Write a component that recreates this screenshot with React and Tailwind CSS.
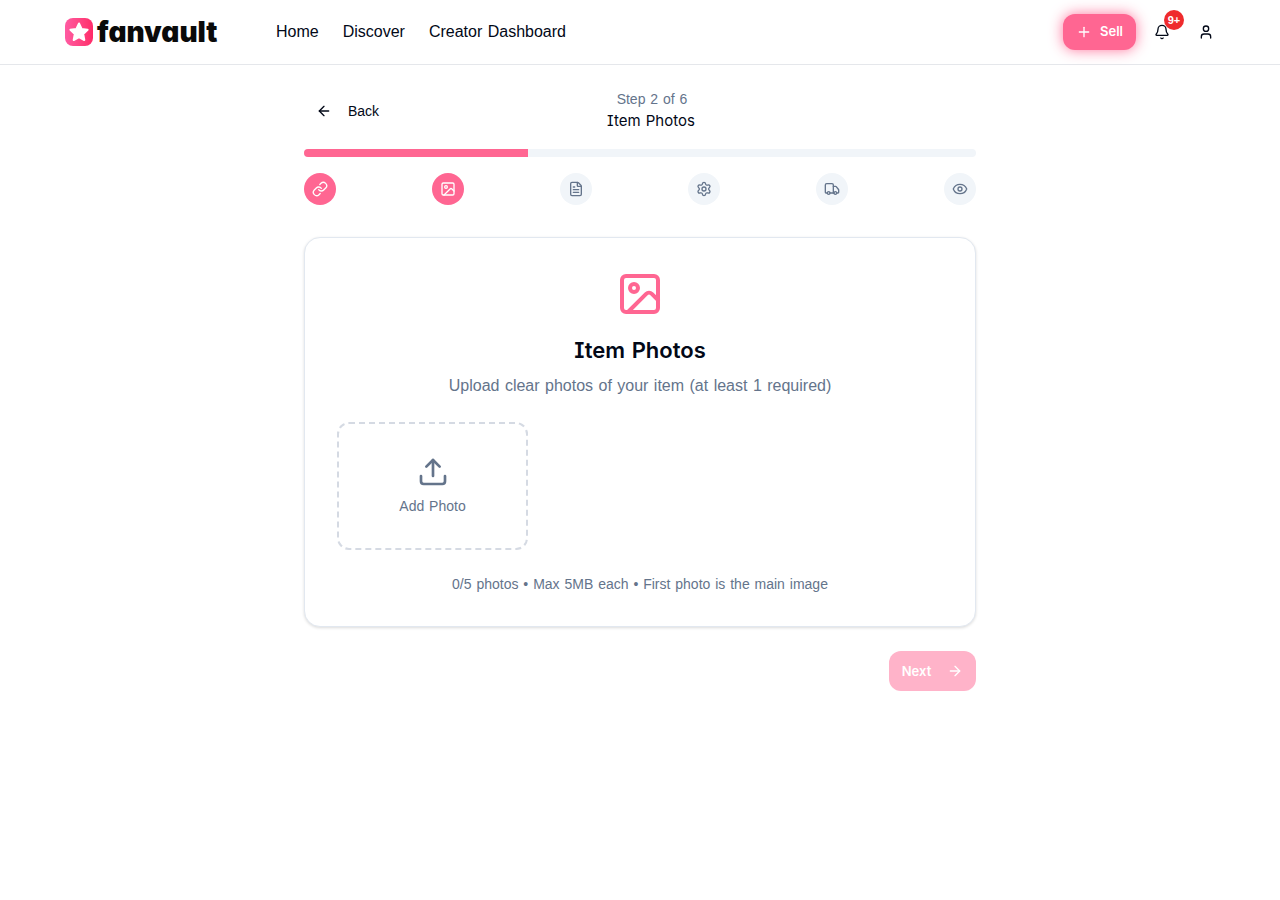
import { ArrowLeft, ArrowRight, Bell, Eye, FileText, Image, Link, Plus, Settings, Truck, Upload, User } from "lucide-react";

const steps = [
  { icon: Link, active: true },
  { icon: Image, active: true },
  { icon: FileText },
  { icon: Settings },
  { icon: Truck },
  { icon: Eye },
];

function Logo() {
  return (
    <a href="#" className="flex w-[152px] items-center gap-1">
      <span className="flex h-7 w-7 flex-none items-center justify-center rounded-lg bg-gradient-to-r from-[#ff5aa2] to-[#ff2a68]">
        <svg viewBox="0 0 24 24" className="h-6 w-6 fill-white">
          <path d="M12 3.5l2.6 5.5 6 .8-4.4 4.2 1.1 6-5.3-2.9-5.3 2.9 1.1-6-4.4-4.2 6-.8z" stroke="white" strokeWidth="2" strokeLinejoin="round" />
        </svg>
      </span>
      <span className="font-['Inter',sans-serif] text-[28px] leading-none font-black text-[#0a0a0a] [font-feature-settings:'cv11'] [word-spacing:0]">fanvault</span>
    </a>
  );
}

export default function App() {
  return (
    <div className="min-h-[900px] bg-white font-['Liberation_Sans',sans-serif] text-[#020817] [word-spacing:1px]">
      <header className="flex h-[65px] items-center border-b border-[#e5e7eb] bg-white pr-[66px] pl-[65px]">
        <Logo />
        <nav className="ml-[59px] flex items-center gap-6 text-base">
          <a href="#">Home</a>
          <a href="#">Discover</a>
          <a href="#">Creator Dashboard</a>
        </nav>
        <div className="ml-auto flex items-center">
          <button type="button" className="flex h-9 w-[73px] items-center justify-center gap-2 rounded-xl bg-[#ff6692] font-['Inter',sans-serif] text-[13px] font-semibold text-white shadow-[0_0_14px_rgba(255,102,146,0.9)]">
            <Plus className="h-4 w-4" />
            Sell
          </button>
          <button type="button" className="relative ml-[18px] flex h-4 w-4 items-center justify-center">
            <Bell className="h-4 w-4" />
            <span className="absolute -top-[14px] left-[10px] flex h-5 w-5 items-center justify-center rounded-full bg-[#ef2b2d] text-[11px] font-bold text-white">9+</span>
          </button>
          <button type="button" className="ml-7 flex h-4 w-4 items-center justify-center">
            <User className="h-4 w-4" />
          </button>
        </div>
      </header>

      <main className="mx-auto w-[672px] pt-6">
        <div className="relative flex h-11 items-center">
          <button type="button" className="flex items-center gap-4 px-3 text-sm">
            <ArrowLeft className="h-4 w-4" />
            Back
          </button>
          <div className="absolute top-0 left-[303px] w-[88px] text-center text-nowrap">
            <p className="pl-[2px] text-sm leading-5 text-[#64748b]">Step 2 of 6</p>
            <p className="font-['Inter',sans-serif] text-[15px] leading-6 [font-feature-settings:'ss02']">Item Photos</p>
          </div>
        </div>

        <div className="mt-4 h-2 overflow-hidden rounded-full bg-[#f1f5f9]">
          <div className="h-full w-1/3 bg-[#ff6692]" />
        </div>

        <div className="mt-4 flex justify-between">
          {steps.map(({ icon: Icon, active }, i) => (
            <div key={i} className={active ? "flex h-8 w-8 items-center justify-center rounded-full bg-[#ff6692] text-white" : "flex h-8 w-8 items-center justify-center rounded-full bg-[#f1f5f9] text-[#64748b]"}>
              <Icon className="h-4 w-4" />
            </div>
          ))}
        </div>

        <section className="mt-8 rounded-2xl border border-[#e2e8f0] bg-white p-8 shadow-[0_1px_3px_rgba(0,0,0,0.14)]">
          <div className="flex flex-col items-center text-center">
            <Image className="h-12 w-12 text-[#ff6692]" />
            <h2 className="mt-4 font-['Inter',sans-serif] text-[22px] leading-8 font-semibold [font-feature-settings:'ss02']">Item Photos</h2>
            <p className="mt-2 text-base leading-6 text-[#64748b]">Upload clear photos of your item (at least 1 required)</p>
          </div>
          <div className="mt-6 flex h-32 w-[191px] flex-col items-center justify-center rounded-xl border-2 border-dashed border-[#d5dae3] text-[#64748b]">
            <Upload className="h-8 w-8" />
            <span className="mt-2 text-sm">Add Photo</span>
          </div>
          <p className="mt-6 text-center text-sm text-[#64748b]">0/5 photos • Max 5MB each • First photo is the main image</p>
        </section>

        <div className="mt-6 flex justify-end">
          <button type="button" className="flex h-10 w-[87px] items-center justify-center gap-4 rounded-xl bg-[#ffb3c9] font-['Inter',sans-serif] text-[13px] font-semibold text-white">
            <span className="pt-px">Next</span>
            <ArrowRight className="h-4 w-4" />
          </button>
        </div>
      </main>
    </div>
  );
}
